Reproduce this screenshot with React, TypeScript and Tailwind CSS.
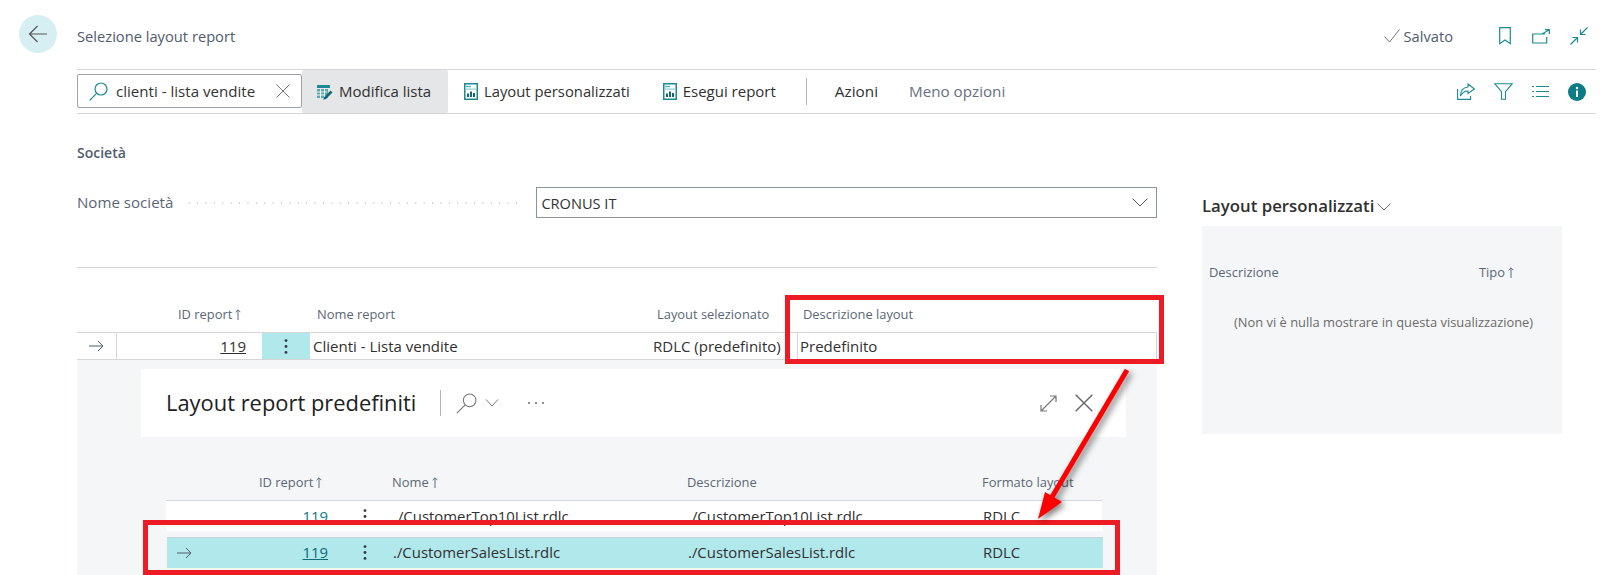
import React from "react";

const teal = "#1b8a93";

function Sort() {
  return (
    <svg width="6" height="11" viewBox="0 0 6 11" className="inline-block ml-[3px] mb-[3px]" fill="none" stroke="#5f6b7a" strokeWidth="1">
      <path d="M3 11V1M.6 3.2 3 .8l2.400 2.400" />
    </svg>
  );
}

function Arrow({ color = "#505c6d" }: { color?: string }) {
  return (
    <svg width="15" height="12" viewBox="0 0 15 12" fill="none" stroke={color} strokeWidth="1">
      <path d="M0 6h14M9 1l5 5-5 5" />
    </svg>
  );
}

function Dots({ h = 15 }: { h?: number }) {
  return (
    <svg width="4" height={h} viewBox="0 0 4 15" fill="#303a45">
      <circle cx="2" cy="1.6" r="1.4" />
      <circle cx="2" cy="7.5" r="1.4" />
      <circle cx="2" cy="13.4" r="1.4" />
    </svg>
  );
}

function ReportIcon() {
  return (
    <svg width="14" height="17" viewBox="0 0 14 17" fill="none">
      <rect x="0.75" y="0.75" width="12.5" height="15.5" fill="#fff" stroke={teal} strokeWidth="1.5" />
      <path d="M2 3.500h5" stroke="#5fb3b9" strokeWidth="1.5" />
      <rect x="2" y="5.5" width="10" height="1.2" fill="#8fcdd1" />
      <path d="M4 14V10.500M7 14V8.500M10 14V10" stroke="#14666e" strokeWidth="2" />
    </svg>
  );
}

function EditListIcon() {
  return (
    <svg width="16" height="16" viewBox="0 0 16 16" fill="none">
      <rect x="0" y="1" width="13" height="3" fill={teal} />
      <path d="M0 5h11v9H0z" fill="#5aa9af" />
      <path d="M0 8h10M0 11h8M3.500 5v9M7.500 5v9" stroke="#fff" strokeWidth="0.9" />
      <path d="M7 13.500 13.500 6.500 15.500 8.500 9 15l-2.600.8z" fill="#14666e" />
    </svg>
  );
}

export default function App() {
  return (
    <div
      className="relative w-[1620px] h-[575px] overflow-hidden bg-white flex flex-col text-[#212121]"
      style={{ fontFamily: '"Open Sans", "Noto Sans", sans-serif' }}
    >
      {/* Header */}
      <header className="h-[69px] flex items-start shrink-0 pl-[19px] pr-[32px]">
        <button className="mt-[15px] w-[38px] h-[38px] rounded-full bg-[#d6eff2] flex items-center justify-center">
          <svg width="20" height="18" viewBox="0 0 20 18" fill="none" stroke="#555" strokeWidth="1.2">
            <path d="M19 9H1.500M9.500 1 1.500 9l8 8" />
          </svg>
        </button>
        <h1 className="ml-[20px] mt-[25px] text-[14.7px] leading-[22px] text-[#505c6d] font-normal">Selezione layout report</h1>
        <div className="ml-auto flex items-center h-[72px]">
          <svg width="16" height="14" viewBox="0 0 16 14" fill="none" stroke="#6b7480" strokeWidth="1">
            <path d="M.5 7.500 5.500 13 15.500.500" />
          </svg>
          <span className="ml-[4px] text-[14.7px] text-[#505c6d]">Salvato</span>
          <svg className="ml-[46px]" width="12" height="18" viewBox="0 0 12 18" fill="none" stroke={teal} strokeWidth="1.2">
            <path d="M.7.7h10.600v16L6 13 .7 16.700z" />
          </svg>
          <svg className="ml-[21px]" width="18" height="15" viewBox="0 0 18 15" fill="none" stroke={teal} strokeWidth="1.2">
            <path d="M13 5H.7v9h14V8M10 5l7-4M13 .7h4.300V5" />
          </svg>
          <svg className="ml-[20px]" width="18" height="18" viewBox="0 0 18 18" fill="none" stroke={teal} strokeWidth="1.2">
            <path d="M17.500.5 10.500 7.500M10.500 2.500v5h5M.5 17.500l7-7M2.500 10.500h5v5" />
          </svg>
        </div>
      </header>

      {/* Toolbar */}
      <div className="ml-[77px] mr-[24px] h-[45px] shrink-0 border-y border-[#d6d6d6] flex items-stretch">
        <div className="w-[225px] h-[34px] mt-[4px] border border-[#9aa3ae] rounded-[2px] flex items-center pl-[11px] pr-[11px]">
          <svg width="19" height="19" viewBox="0 0 19 19" fill="none" stroke={teal} strokeWidth="1.2">
            <circle cx="12" cy="7" r="6" />
            <path d="M7.600 11.400.7 18.300" />
          </svg>
          <span className="ml-[8px] text-[15.1px] text-[#333]">clienti - lista vendite</span>
          <svg className="ml-auto" width="14" height="14" viewBox="0 0 14 14" fill="none" stroke="#777" strokeWidth="1">
            <path d="M.5.500l13 13M13.500.500l-13 13" />
          </svg>
        </div>
        <div className="w-[146px] bg-[#e5e6e8] rounded-[2px] flex items-center gap-[6px] pl-[15px] text-[15px] text-[#303030]">
          <EditListIcon />
          <span>Modifica lista</span>
        </div>
        <div className="ml-[16px] flex items-center gap-[6px] text-[14.8px] text-[#303030]">
          <ReportIcon />
          <span>Layout personalizzati</span>
        </div>
        <div className="ml-[33px] flex items-center gap-[6px] text-[15px] text-[#303030]">
          <ReportIcon />
          <span>Esegui report</span>
        </div>
        <div className="ml-[30px] my-[8px] w-px bg-[#b5b5b5]" />
        <div className="ml-[28px] flex items-center text-[15.3px] text-[#303030]">Azioni</div>
        <div className="ml-[31px] flex items-center text-[15.2px] text-[#667080]">Meno opzioni</div>
        <div className="ml-auto flex items-center gap-[19px] pr-[10px]">
          <svg className="ml-px" width="18" height="17" viewBox="0 0 18 17" fill="none" stroke={teal} strokeWidth="1.1">
            <path d="M.6 6v10.400h13V13" />
            <path d="M11 1l6.400 5L11 10.500V8C7 8 5 10 3.500 13 3.500 8 6 4.500 11 4z" />
          </svg>
          <svg width="19" height="17" viewBox="0 0 19 17" fill="none" stroke={teal} strokeWidth="1.1">
            <path d="M.7.7h17.600l-6.800 8v7.600H7.500V8.700z" />
          </svg>
          <svg width="17" height="13" viewBox="0 0 17 13" fill="none" stroke={teal} strokeWidth="1.1">
            <path d="M0 1.500h2M4 1.500h13M0 6.500h2M4 6.500h13M0 11.500h2M4 11.500h13" />
          </svg>
          <svg width="18" height="18" viewBox="0 0 18 18">
            <circle cx="9" cy="9" r="9" fill="#0e7c86" />
            <rect x="8" y="7.500" width="2" height="6.500" fill="#fff" />
            <circle cx="9" cy="5" r="1.200" fill="#fff" />
          </svg>
        </div>
      </div>

      {/* Body */}
      <div className="flex flex-1 ml-[77px] min-h-0">
        <main className="w-[1080px] flex flex-col shrink-0">
          <h2 className="mt-[29px] h-[20px] leading-[20px] text-[14px] font-semibold text-[#505c6d]">Società</h2>
          <div className="mt-[24px] h-[31px] flex items-center">
            <span className="text-[15.1px] text-[#5b6675]">Nome società</span>
            <span className="ml-[12px] w-[339px] h-[4px] bg-[radial-gradient(circle,#c9ccd0_0.8px,transparent_1px)] bg-[length:8.400px_4px] bg-repeat-x" />
            <div className="ml-[12px] flex-1 h-[31px] border border-[#8a94a1] flex items-center pl-[4px] pr-[8px]">
              <span className="text-[14.6px] text-[#333] mt-[2px]">CRONUS IT</span>
              <svg className="ml-auto" width="16" height="9" viewBox="0 0 16 9" fill="none" stroke="#555" strokeWidth="1">
                <path d="M.5.500 8 8 15.500.500" />
              </svg>
            </div>
          </div>
          <div className="mt-[49px] border-t border-[#d6d6d6]" />

          <div className="h-[64px] shrink-0 grid grid-cols-[39px_146px_48px_340px_147px_360px] items-end pb-[8px] text-[12.9px] leading-[20px] text-[#5b6675]">
            <span />
            <span className="pl-[62px]">ID report<Sort /></span>
            <span />
            <span className="pl-[7px]">Nome report</span>
            <span className="pl-[7px]">Layout selezionato</span>
            <span className="pl-[6px]">Descrizione layout</span>
          </div>

          <div className="h-[28px] shrink-0 grid grid-cols-[39px_146px_48px_340px_147px_360px] border-y border-[#d6d6d6] text-[15px] text-[#303030]">
            <div className="flex items-center justify-center"><Arrow /></div>
            <div className="border-l border-[#d6d6d6] flex items-center justify-end pr-[16px]"><span className="underline">119</span></div>
            <div className="bg-[#b1e8ec] flex items-center justify-center"><Dots /></div>
            <div className="pl-[3px] flex items-center">Clienti - Lista vendite</div>
            <div className="pl-[3px] flex items-center whitespace-nowrap">RDLC (predefinito)</div>
            <div className="border-l border-r border-[#d6d6d6] pl-[2px] flex items-center">Predefinito</div>
          </div>

          {/* Embedded page */}
          <section className="flex-1 bg-[#f5f6f8] min-h-0 overflow-hidden">
            <div className="ml-[64px] mt-[9px] w-[985px] h-[68px] bg-white flex items-center pl-[25px] pr-[33px]">
              <h3 className="text-[21.900px] font-medium text-[#212121]">Layout report predefiniti</h3>
              <div className="ml-[24px] w-px h-[26px] bg-[#b5b5b5]" />
              <svg className="ml-[15px]" width="21" height="21" viewBox="0 0 20 20" fill="none" stroke="#777" strokeWidth="1">
                <circle cx="13" cy="7" r="6" />
                <path d="M8.500 11.500.8 19.200" />
              </svg>
              <svg className="ml-[8px]" width="14" height="8" viewBox="0 0 13 8" fill="none" stroke="#777" strokeWidth="1">
                <path d="M.5.500 6.500 7 12.500.500" />
              </svg>
              <span className="ml-[29px] flex gap-[5px]">
                <i className="w-[2px] h-[2px] rounded-full bg-[#666]" />
                <i className="w-[2px] h-[2px] rounded-full bg-[#666]" />
                <i className="w-[2px] h-[2px] rounded-full bg-[#666]" />
              </span>
              <svg className="ml-auto" width="17" height="17" viewBox="0 0 17 17" fill="none" stroke="#777" strokeWidth="1.2">
                <path d="M1 16 16 1M1 10v6h6M10 1h6v6" />
              </svg>
              <svg className="ml-[18px]" width="18" height="18" viewBox="0 0 18 18" fill="none" stroke="#666" strokeWidth="1.4">
                <path d="M.7.7l16.600 16.600M17.300.7.7 17.300" />
              </svg>
            </div>

            <div className="ml-[89px] w-[936px] h-[63px] grid grid-cols-[40px_122px_64px_295px_295px_120px] items-end pb-[8px] text-[12.9px] leading-[20px] text-[#5b6675]">
              <span />
              <span className="pl-[53px] whitespace-nowrap">ID report<Sort /></span>
              <span />
              <span>Nome<Sort /></span>
              <span>Descrizione</span>
              <span className="whitespace-nowrap">Formato layout</span>
            </div>
            <div className="ml-[89px] w-[936px] h-[31px] bg-white border-t border-[#d3d8de] grid grid-cols-[40px_122px_64px_295px_295px_120px] items-center text-[14.9px] text-[#303030]">
              <span />
              <span className="text-right text-[#0e7c86]">119</span>
              <span className="pl-[35px]"><Dots /></span>
              <span className="pl-[2px]">./CustomerTop10List.rdlc</span>
              <span className="pl-[1px]">./CustomerTop10List.rdlc</span>
              <span className="pl-[1px]">RDLC</span>
            </div>
            <div className="ml-[90px] mt-[6px] w-[936px] h-[31px] pb-[1px] bg-[#b1e8ec] border-t border-[#c5d3d6] grid grid-cols-[39px_122px_64px_295px_295px_120px] items-center text-[14.9px] text-[#303030]">
              <span className="pl-[10px]"><Arrow /></span>
              <span className="text-right text-[#0e6a73] underline">119</span>
              <span className="pl-[35px]"><Dots /></span>
              <span className="pl-[1px]">./CustomerSalesList.rdlc</span>
              <span className="pl-[1px]">./CustomerSalesList.rdlc</span>
              <span className="pl-[1px]">RDLC</span>
            </div>
          </section>
        </main>

        {/* Right panel */}
        <aside className="ml-[45px] w-[360px]">
          <div className="mt-[81px] h-[22px] flex items-center">
            <span className="text-[16.8px] font-semibold text-[#303030]">Layout personalizzati</span>
            <svg className="ml-[3px] mt-[2px]" width="14" height="8" viewBox="0 0 14 8" fill="none" stroke="#666" strokeWidth="1">
              <path d="M.5.500 7 7 13.500.500" />
            </svg>
          </div>
          <div className="mt-[9px] h-[208px] bg-[#f5f6f8] text-[12.9px]">
            <div className="pt-[36px] pl-[7px] flex text-[#5b6675] leading-[20px]">
              <span className="w-[270px]">Descrizione</span>
              <span>Tipo<Sort /></span>
            </div>
            <div className="mt-[30px] pl-[32px] text-[#6a6a6a] leading-[20px] whitespace-nowrap">(Non vi è nulla mostrare in questa visualizzazione)</div>
          </div>
        </aside>
      </div>

      {/* Annotations */}
      <div className="absolute left-[785px] top-[295px] w-[379px] h-[69px] border-[5px] border-[#ed1c24]" />
      <div className="absolute left-[143px] top-[520px] w-[977px] h-[55px] border-[5px] border-[#ed1c24]" />
      <svg className="absolute left-[1030px] top-[365px] drop-shadow-[3px_3px_3px_rgba(0,0,0,0.5)]" width="105" height="160" viewBox="1030 365 105 160">
        <path d="M1127 370 1052 497" stroke="#ff0000" strokeWidth="5" fill="none" />
        <polygon points="1038,519 1045,492 1062,502" fill="#ff0000" />
      </svg>
    </div>
  );
}
